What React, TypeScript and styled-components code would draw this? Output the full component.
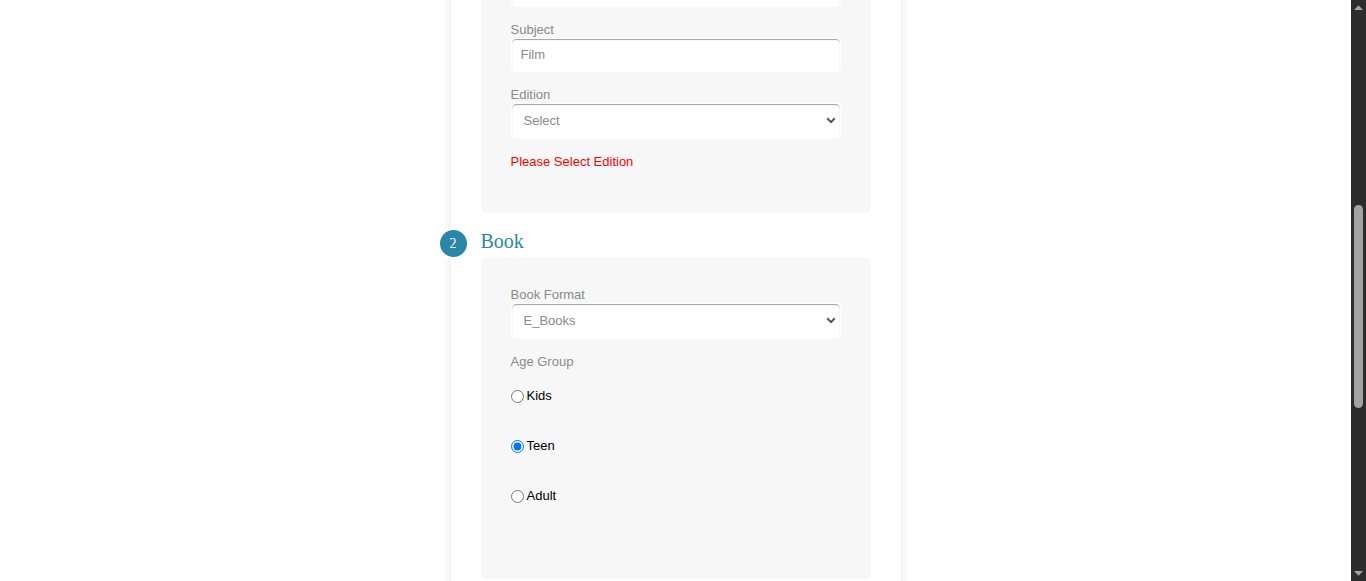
import { useLayoutEffect, useRef } from 'react'
import styled, { createGlobalStyle } from 'styled-components'

const accent = '#2a85a8'
const muted = '#8a8a8a'

const detailFields = ['Title', 'Author', 'Publisher', 'ISBN', 'Language']
const priceFields = ['Price', 'Discount', 'Stock']

function Chevron() {
  return (
    <ChevronBox width="10" height="7" viewBox="0 0 10 7">
      <path d="M1.2 1.3 5 5.1l3.8-3.8" fill="none" stroke="#555" strokeWidth="2" />
    </ChevronBox>
  )
}

// the page is shown scrolled; the window's own scrollbar is hidden in the
// headless browser, so draw the dark one from the screenshot over the edge
function ScrollBar() {
  return (
    <Track>
      <Arrow width="15" height="15" viewBox="0 0 15 15">
        <path d="M3 10h9L7.5 5.2z" fill="#a3a3a3" />
      </Arrow>
      <ThumbLane>
        <Thumb />
      </ThumbLane>
      <Arrow width="15" height="15" viewBox="0 0 15 15">
        <path d="M3 5h9L7.5 9.8z" fill="#a3a3a3" />
      </Arrow>
    </Track>
  )
}

function App() {
  const subjectRef = useRef<HTMLLabelElement>(null)

  useLayoutEffect(() => {
    if (!subjectRef.current) return
    const top = subjectRef.current.getBoundingClientRect().top + window.scrollY
    window.scrollTo(0, top - 21)
  }, [])

  return (
    <>
      <GlobalStyle />
      <Sheet>
        <PageTitle>New Publication</PageTitle>
        <Intro>Fill in the details of the publication below. Fields marked in red need your attention before you can continue.</Intro>

        <StepRow>
          <StepBadge>1</StepBadge>
          <StepTitle>Details</StepTitle>
        </StepRow>
        <Card>
          {detailFields.map((name) => (
            <Field key={name}>
              <Label>{name}</Label>
              <TextInput defaultValue="" />
            </Field>
          ))}
          <Field>
            <Label ref={subjectRef}>Subject</Label>
            <TextInput defaultValue="Film" />
          </Field>
          <Field>
            <Label>Edition</Label>
            <SelectWrap>
              <Select defaultValue="">
                <option value="">Select</option>
                <option value="first">First</option>
                <option value="second">Second</option>
              </Select>
              <Chevron />
            </SelectWrap>
          </Field>
          <ErrorText>Please Select Edition</ErrorText>
        </Card>

        <StepRow>
          <StepBadge>2</StepBadge>
          <StepTitle>Book</StepTitle>
        </StepRow>
        <Card>
          <Field>
            <Label>Book Format</Label>
            <SelectWrap>
              <Select defaultValue="E_Books">
                <option value="E_Books">E_Books</option>
                <option value="Paperback">Paperback</option>
                <option value="Hardcover">Hardcover</option>
              </Select>
              <Chevron />
            </SelectWrap>
          </Field>
          <Label>Age Group</Label>
          <RadioGroup>
            {['Kids', 'Teen', 'Adult'].map((age) => (
              <RadioRow key={age}>
                <Radio type="radio" name="age" defaultChecked={age === 'Teen'} />
                {age}
              </RadioRow>
            ))}
          </RadioGroup>
        </Card>

        <StepRow>
          <StepBadge>3</StepBadge>
          <StepTitle>Pricing</StepTitle>
        </StepRow>
        <Card>
          {priceFields.map((name) => (
            <Field key={name}>
              <Label>{name}</Label>
              <TextInput defaultValue="" />
            </Field>
          ))}
        </Card>
        <Actions>
          <SubmitBtn>Submit</SubmitBtn>
        </Actions>
      </Sheet>
      <ScrollBar />
    </>
  )
}

const GlobalStyle = createGlobalStyle`
  html {
    background: #fff;
  }
  body {
    margin: 0 15px 0 0;
    background: #fff;
    font-family: "Liberation Sans", Arial, sans-serif;
  }
`

const Sheet = styled.div`
  width: 450px;
  box-sizing: border-box;
  margin: 0 auto;
  padding: 74px 30px 86px;
  background: #fff;
  box-shadow: 0 0 12px rgba(0, 0, 0, 0.1);
`
const PageTitle = styled.h1`
  margin: 0 0 8px;
  font: 28px/34px "Liberation Serif", "Times New Roman", serif;
  color: ${accent};
  font-weight: normal;
`
const Intro = styled.p`
  margin: 0 0 10px;
  font-size: 13px;
  line-height: 20px;
  color: ${muted};
`
const StepRow = styled.div`
  display: flex;
  align-items: center;
  gap: 14px;
  height: 27px;
  margin: 17px 0 0 -41px;
`
const StepBadge = styled.span`
  width: 27px;
  height: 27px;
  border-radius: 50%;
  background: ${accent};
  box-shadow: 0 0 0 3px #fff;
  color: #fff;
  display: flex;
  align-items: center;
  justify-content: center;
  font: 14px "Liberation Serif", "Times New Roman", serif;
`
const StepTitle = styled.h2`
  margin: -4px 0 0;
  font: 20px/27px "Liberation Serif", "Times New Roman", serif;
  font-weight: normal;
  color: ${accent};
`
const Card = styled.div`
  background: #f7f7f7;
  border-radius: 6px;
  padding: 29px 30px 30px;
`
const Field = styled.div`
  margin-bottom: 14px;
`
const Label = styled.label`
  display: block;
  padding-top: 1px;
  font-size: 13px;
  line-height: 16px;
  color: ${muted};
`
const TextInput = styled.input`
  display: block;
  width: 100%;
  height: 34px;
  box-sizing: border-box;
  margin: 0;
  padding: 0 9px 2px;
  border: 1px solid #fff;
  border-radius: 5px;
  background: #fff;
  box-shadow: inset 0 1px 1px rgba(0, 0, 0, 0.38);
  font: 13px "Liberation Sans", Arial, sans-serif;
  color: ${muted};
  outline: none;
`
const SelectWrap = styled.div`
  position: relative;
`
const Select = styled.select`
  display: block;
  width: 100%;
  height: 36px;
  box-sizing: border-box;
  margin: 0;
  padding: 0 12px 2px;
  appearance: none;
  border: 1px solid #fff;
  border-radius: 5px;
  background: #fff;
  box-shadow: inset 0 1px 1px rgba(0, 0, 0, 0.38);
  font: 13px "Liberation Sans", Arial, sans-serif;
  color: ${muted};
  outline: none;
`
const ChevronBox = styled.svg`
  position: absolute;
  right: 5px;
  top: 14px;
  pointer-events: none;
`
const ErrorText = styled.div`
  padding-top: 1px;
  font-size: 13px;
  line-height: 16px;
  color: #ff0000;
  margin-bottom: 13px;
`
const RadioGroup = styled.div`
  display: flex;
  flex-direction: column;
  gap: 34px;
  margin: 18px 0 45px;
`
const RadioRow = styled.label`
  display: flex;
  align-items: center;
  font-size: 13px;
  line-height: 16px;
  color: #000;
`
const Radio = styled.input`
  width: 13px;
  height: 13px;
  margin: 0 3px 0 0;
`
const Actions = styled.div`
  display: flex;
  justify-content: flex-end;
  margin-top: 30px;
`
const SubmitBtn = styled.button`
  height: 40px;
  padding: 0 28px;
  border: none;
  border-radius: 5px;
  background: ${accent};
  color: #fff;
  font: 15px "Liberation Sans", Arial, sans-serif;
`
const Track = styled.aside`
  position: fixed;
  top: 0;
  right: 0;
  width: 15px;
  height: 100vh;
  background: #2c2c2c;
  display: flex;
  flex-direction: column;
`
const Arrow = styled.svg`
  flex: none;
  display: block;
`
const ThumbLane = styled.div`
  flex: 1;
  display: flex;
  justify-content: center;
  padding-top: 190px;
`
const Thumb = styled.div`
  width: 9px;
  height: 203px;
  border-radius: 5px;
  background: #a3a3a3;
`

export default App
